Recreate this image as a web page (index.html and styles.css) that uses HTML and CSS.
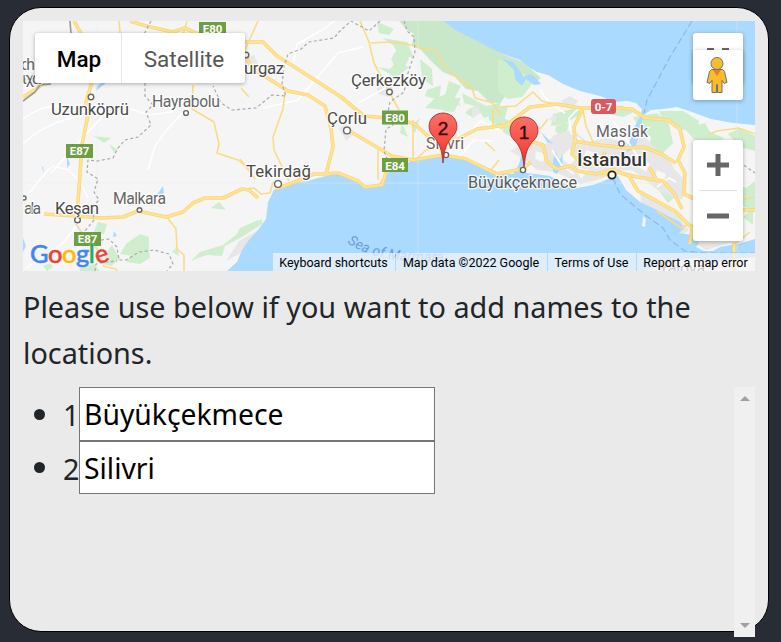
FILE: index.html
```html
<!DOCTYPE html>
<html lang="en">
<head>
<meta charset="utf-8">
<title>Locations</title>
<link rel="stylesheet" href="styles.css">
</head>
<body>
<main class="panel">
  <section class="map">
    <svg class="tiles" viewBox="23 21 732 250" width="732" height="250">
      <rect x="23" y="21" width="732" height="250" fill="#f5f5f5"/>
      <!-- woodland -->
      <g fill="#ceeecd">
        <path fill="#c8e8c9" d="M399 21H444L500 53L523 62L532 70L541 78L532 84L521 75L510 88L500 104L488 101L478 91L466 89L455 77L443 72L432 62L421 50L412 45L414 34L407 30Z"/>
        <path d="M377 22l17 7-5 6-10-2zM382 38l25 4 7 16-15-3-6-10zM391 59l8-13 10 12-6 13-8-4zM396 62l13 5-13 11-18-11 12 2zM420 59l12 10 1 17-11-7zM427 90l14-5-2 15-14-4zM433 100l17-8-5 18-20-2zM449 81l12 5-6 11 6 9-17-7zM448 99l13-1-7 14-11-1zM420 118l-5 15-4-7zM402 123l6 14-8-4zM462 93l24 13 14-3v9l-16 6-7-11-13-4zM469 109l9-4-4 13-9-5zM488 111l20-5-6 23-13-9z"/>
        <path d="M498 59l21 9 13 16-10 13-14 2-10-8zM553 114l23-6 6 5-17 11-14 2zM556 126l13-3-4 16-10-8zM604 113l17-8 13 7-11 5zM633 117l24-4 12 11 4 19-12 12-12-7 2-11-12-9zM659 111l24 0 16 10-1 11-18-3-18-11zM685 129l20-6 5 9 14 6-12 9-15-4zM728 134l12-6 15 7v16l-15-4zM651 145l13 8-4 11-12-5zM657 188l14-6 7 12-10 9zM730 181l16 7 9-7v30l-13-5-8-10zM743 217l10-10v18zM504 118l14 8-5 12-10-6zM553 145l10 2-3 7z"/>
        <path d="M94 136l17 2-7 5zM109 144l9 6-4 3zM120 254l6-10 14-10 9 3v15l-16 4zM98 222l9 2-3 10-12 2zM105 255l7-10 8 14-9 7-8-2zM134 252l15-2 1 8-10 6-14-2zM211 208l8-6 7 8zM191 261l9-9 23-7 19-15 20-11v5l-20 13-17 9-3 10-15-1-9 3zM172 252l5-5 2 9zM43 266l7-3 3 4-6 4zM240 228l18-8 5 3-12 7-15 6zM23 80l10-7 8 7-8 5h-9zM79 268l15-4 6 7H80z"/>
      </g>
      <!-- built-up areas -->
      <g fill="#e7e7e7">
        <path d="M377 83l8-4 8 8-5 10-11-4zM339 128l8-4 8 9-9 8zM472 109l6-3 3 7-9 5zM245 58l9-3 4 8-8 5zM226 261l13-20 19-11-7 13-12 11z"/>
        <path d="M510 151l18-9 15 5 11-12 18-5 16 12 18-4 22 5 15-8 14 15 10 5 8 15 12 12-5 18-9-3-13-5-17-14-11-8-20 1-11 8-20 5-25-12-19-2-13-11zM640 190l14 7 24 19 11 14-7 5-12-13-29-17zM700 228l15 8 17-3 6 7-32 10-13-8z"/>
        <path d="M549 119l8-5-2 9zM561 101l9-5 8 5-6 8z"/>
      </g>
      <!-- open ground between the districts -->
      <path fill="#f7f7f7" d="M536 151l10 3-3 8-8-3zM560 158l9-9 9 7-8 9zM586 150l10 3-4 11-9-4zM575 167l14 3-8 9zM641 158l9 6-4 8-9-6zM657 170l9 4-2 9-9-5z"/>
      <!-- sea and lakes -->
      <g fill="#aadaff">
        <path d="M443 21L457 31L473 39L500 53L520 60L530 68L537 72L548 75L563 84L580 91L600 96L615 102L627 101L636 103L642 109L640 117L635 126L631 138L628 145L631 147L635 139L639 128L645 114L651 110L663 109L677 107L692 112L711 119L733 123L755 125V21Z"/>
        <path d="M227 271L237 262L242 250L248 241L258 230L266 219L268 202L274 190L281 185L307 181L337 173L353 178L363 187L378 186L383 178L389 172L404 165L414 159L440 156L461 159L480 164L497 172L513 174L519 164L522 153L526 159L526 173L535 174L550 176L562 182L577 188L593 185L611 178L618 176L626 190L640 202L657 210L668 216L680 222L684 228L679 233L692 235L699 243L696 247L704 251L713 251L720 247L738 244L755 239V257L731 259L710 264L697 258L680 260L659 264L646 271Z"/>
        <path d="M503 59l10 3 8 10 2 5 8-3 6 5 4 5-7 1-8-6-4 7-7-7-1-9zM553 160l3-8 3 9 4-7-1 12-5 8-4-2zM541 132l12 12-6-2zM626 152l6-11 6-3-3 11zM156 196l7-10 1 7-5 3zM114 231l3 5-4 1zM43 166l1 9-2-8zM67 156l3 8-3 4zM23 238l3 8-3 6zM97 86l8-6 1 3-10 8z"/>
      </g>
      <path fill="#f5f5f5" d="M643 216l3 3-1 8-3-1z"/>
      <g fill="none" stroke="#e9edf1" stroke-width="1"><path d="M23 183H755M97 21V271M418 21V271M737 21V271" opacity=".45"/></g>
      <!-- local roads -->
      <g class="minor">
        <path d="M23 144q17-17 44-25l48-11 14 1M29 193l17-21 7-6 16 4 11 12 8 16M51 173l27-30 24-26M131 109l17 6 24-3M148 170l7-24 10-14 23-25M263 108l35-8 40-47 25-6M294 61l3-17 27-15 10-8M358 103l31-17 17-2M23 119q16-13 36-13M25 269l38-26 16-20M440 143l26-7 15-15 18 9M459 157l15-17 18 1"/>
        <path d="M582 105l-13 13 2 15 16 12M607 112l19 27 19 28M552 150l10 16 12 8M657 187l12-9 7 4M739 127l16 8M540 90l10 14 15 9"/>
      </g>
      <!-- regional roads -->
      <g class="road-line">
        <path d="M119 21l1 12M193 85l-1 24 22 13 5 22-2 9 21 7 12 10M187 21l-4 14M258 21l-14 31M360 21l9 21 5 21 25 47M371 43q31-3 49 5l17 4 7 14 13 11 15 11 3 10 18 5 8 13M285 93l-2 16-10 28 1 13 15 31M413 120v42M166 216l10 13 1 20 7 6v16M103 266l13 3 1 2M76 224l6 9 18 19M500 107l16-1 17-14 9 9 30 7M241 88l8 9M657 211l24 17 8-4 16 6M709 134l8-3 22-3 16 6M493 109v20M413 162l13-12 8-1M485 142l10 9M583 110l3 16 7 16M742 200l12-3M750 232l-15 12-1 17"/>
        <path d="M245 189l9-1 7 6 9-1 3-11M378 150v30M240 159l15 20M548 119l-7 9-12 1M499 160l-8 10 7 4"/>
      </g>
      <!-- main roads: amber casing under a pale fill -->
      <g class="trunk-case">
        <path d="M23 97q17-9 26-20l15-9M92 82l-6 20 2 13-6 30-3 43-2 26M44 214l33 2 25 2 21-1 15-6 28 6 17-5 10-9 12-5h18l19-9 7 1 9 8"/>
        <path d="M74 21l8 14M130 21l16 5 27 6 12-4 15 7 45 7h18l14 14 27 17 37 24 23 19 34 3 17 5 19 18 24-3 19-10 37-5"/>
        <path d="M245 55l7 13 36 23 20 4 17 11 6 22 2 19-7 27-12 0-22 9-16 6M346 129l46 27 21 4 30-5 23 4 30 15 26-5 9-7M324 174l14-1 20 8 7 6 17-2 5-15"/>
        <path d="M500 128l9-5 21-16 27-3 24 4 32 0 19 1 13 9 23 2 12 9 4 18-6 13 7 13-1 21 11 5M583 108l-9 19 1 13-3 14 12 11 15-2 6-11M573 141l27 4 27 3 17-1 17 7 15 9M520 148l13-6 10 3 4 17 10 7 14-3 7 5 18 3 20-5M602 176l12-6 15 6 9 15 13 7 24 13 17 17-2 16M617 172l20 5 26 4 11 12 8 16M649 167l9 15M742 210h13M734 242v29"/>
      </g>
      <g class="trunk-fill">
        <path d="M23 97q17-9 26-20l15-9M92 82l-6 20 2 13-6 30-3 43-2 26M44 214l33 2 25 2 21-1 15-6 28 6 17-5 10-9 12-5h18l19-9 7 1 9 8"/>
        <path d="M74 21l8 14M130 21l16 5 27 6 12-4 15 7 45 7h18l14 14 27 17 37 24 23 19 34 3 17 5 19 18 24-3 19-10 37-5"/>
        <path d="M245 55l7 13 36 23 20 4 17 11 6 22 2 19-7 27-12 0-22 9-16 6M346 129l46 27 21 4 30-5 23 4 30 15 26-5 9-7M324 174l14-1 20 8 7 6 17-2 5-15"/>
        <path d="M500 128l9-5 21-16 27-3 24 4 32 0 19 1 13 9 23 2 12 9 4 18-6 13 7 13-1 21 11 5M583 108l-9 19 1 13-3 14 12 11 15-2 6-11M573 141l27 4 27 3 17-1 17 7 15 9M520 148l13-6 10 3 4 17 10 7 14-3 7 5 18 3 20-5M602 176l12-6 15 6 9 15 13 7 24 13 17 17-2 16M617 172l20 5 26 4 11 12 8 16M649 167l9 15M742 210h13M734 242v29"/>
      </g>
      <!-- borders -->
      <path d="M70 21l1 13M23 101l12-9 5-7 11-1" fill="none" stroke="#999" stroke-width="1.600"/>
      <g class="border">
        <path d="M151 21l-8 15M145 83l0 13 8 9-7 7 5 13-13 12-13 3-7 8-5 10-16 3-9-1-1 12 11 7-4 13 5 8-7 7 2 13-10 12M380 21l-11 10-18-10-12 11-5 6-25 4-8 7-13 5-4 13-2 17 4 12-14-1-16 13-24 2-11-7-8-17M404 21l3 10 7 6 1 15-7 21-4 19-14 10-2 10 5 13-7 4-2 22 4 10M101 240l8-1 8 8 2 13h7l13-8 15-2 15 4 4 10-6 7M95 271l1-7 11-2 10-1M735 159l20 14"/>
      </g>
      <g class="ferry"><path d="M692 21l-22 36-23 43-3 13"/><path d="M613 178l7 16 24 20 19 14 7 12 15 11 19 2h51"/></g>
      <!-- settlement dots -->
      <g class="dots"><circle cx="91" cy="97" r="2.800"/><circle cx="186" cy="113" r="2.400"/><circle cx="246" cy="55" r="2.800"/><circle cx="389.500" cy="92" r="2.800"/><circle cx="347" cy="130.500" r="3.400"/><circle cx="278" cy="184" r="3.400"/><circle cx="77.500" cy="220" r="2.800"/><circle cx="139.500" cy="210" r="2.300"/><circle cx="24" cy="198" r="2"/><circle cx="446" cy="155" r="2.600"/><circle cx="523" cy="170" r="2.600"/><circle cx="621.500" cy="143.500" r="2.600"/><circle class="city" cx="612" cy="175" r="3.700"/></g>
      <!-- road shields -->
      <g class="shields">
        <g fill="#6c9f43"><rect x="199" y="22" width="27" height="13"/><rect x="66" y="144" width="27" height="14"/><rect x="74" y="232" width="27" height="14"/><rect x="382" y="110.500" width="26" height="14"/><rect x="382" y="158" width="26" height="14"/></g>
        <rect x="591" y="99" width="25" height="15" rx="3" fill="#d85a60"/>
        <text x="212.500" y="33">E80</text><text x="79.500" y="155">E87</text><text x="87.500" y="243">E87</text><text x="395" y="121.500">E80</text><text x="395" y="169.500">E84</text><text x="603.500" y="111">0-7</text>
      </g>
      <g class="places">
        <text x="51" y="115" textLength="78">Uzunköprü</text>
        <text x="152" y="107" textLength="68" class="small">Hayrabolu</text>
        <text x="244" y="74" textLength="40">urgaz</text>
        <text x="351" y="86" textLength="75">Çerkezköy</text>
        <text x="327" y="124" textLength="40">Çorlu</text>
        <text x="246" y="177" textLength="65">Tekirdağ</text>
        <text x="55" y="213.500" textLength="44">Keşan</text>
        <text x="113" y="204" textLength="53" class="small">Malkara</text>
        <text x="24" y="214" textLength="17" class="small">ala</text>
        <text x="21" y="70" textLength="14" class="small">ch</text>
        <text x="22" y="84" textLength="19" class="small">ιχα</text>
        <text x="426" y="148.500" textLength="38" class="small">Silivri</text>
        <text x="468" y="188" textLength="109" class="town">Büyükçekmece</text>
        <text x="596" y="137" textLength="52" class="small">Maslak</text>
        <text x="577" y="166" textLength="70" class="capital">İstanbul</text>
        <text x="659" y="274" textLength="46" class="small">Yalova</text>
      </g>
      <path id="sea" d="M347 243Q369 257 400 260T470 260" fill="none"/>
      <text class="sea"><textPath href="#sea">Sea of Marmara</textPath></text>
      <!-- numbered pins -->
      <g class="pin" transform="translate(443 163)"><path d="M0 0C-1-14-4-21-10-27C-17-34-15-49 0-50C15-49 17-34 10-27C4-21 1-14 0 0Z"/><text y="-28">2</text></g>
      <g class="pin" transform="translate(524 167)"><path d="M0 0C-1-14-4-21-10-27C-17-34-15-49 0-50C15-49 17-34 10-27C4-21 1-14 0 0Z"/><text y="-28">1</text></g>
      <defs><linearGradient id="pinFill" x2="0" y2="1"><stop stop-color="#fb7168"/><stop offset=".6" stop-color="#f64b42"/><stop offset="1" stop-color="#d72923"/></linearGradient></defs>
    </svg>
    <div class="map-types"><button class="type active">Map</button><button class="type">Satellite</button></div>
    <div class="fullscreen"><svg width="22" height="22" viewBox="0 0 22 22"><path d="M1.500 8v-6.500H7M15 1.500h5.500V8" fill="none" stroke="#666" stroke-width="3"/></svg></div>
    <div class="street-view">
      <svg width="22" height="38" viewBox="0 0 22 38"><g fill="#fbbc2b" stroke="#737373"><path d="M5.500 13.500h11l2 2 2.500 11-3 .8-2-3v12.200h-4.500v-8h-1v8H6V24.300l-2 3-3-.8 2.500-11z"/><circle cx="11" cy="7.500" r="6"/></g><path d="M7 14h8l-4 6z" fill="#e58026"/></svg>
    </div>
    <div class="zoom-controls"><button class="zoom" aria-label="Zoom in"><svg width="22" height="22" viewBox="0 0 22 22"><path d="M0 11h22M11 0v22" stroke="#666" stroke-width="5"/></svg></button><hr><button class="zoom" aria-label="Zoom out"><svg width="22" height="22" viewBox="0 0 22 22"><path d="M0 11h22" stroke="#666" stroke-width="5"/></svg></button></div>
    <div class="brand"><span class="blue">G</span><span class="red">o</span><span class="yellow">o</span><span class="blue">g</span><span class="green">l</span><span class="red e">e</span></div>
    <footer class="credits"><span class="c1">Keyboard shortcuts</span><span class="c2">Map data ©2022 Google</span><span class="c3">Terms of Use</span><span class="c4">Report a map error</span></footer>
  </section>
  <p class="hint">Please use below if you want to add names to the<br>locations.</p>
  <div class="list-area">
    <ul class="locations">
      <li><span class="num">1</span><input value="Büyükçekmece" aria-label="Location 1"></li>
      <li><span class="num">2</span><input value="Silivri" aria-label="Location 2"></li>
    </ul>
    <div class="scrollbar"><i class="up"></i><i class="down"></i></div>
  </div>
</main>
</body>
</html>
```
FILE: styles.css
```css
* { box-sizing: border-box; }
html, body { margin: 0; height: 642px; overflow: hidden; }
body { background: #282c34; padding: 7px 12px 0 9px; }
.panel { width: 760px; height: 625px; border: 1px solid #000; border-radius: 32px; background: #eaeaea; padding: 13px; color: #212529; font-family: "Noto Sans", sans-serif; }
.map { position: relative; width: 732px; height: 250px; overflow: hidden; font-family: Roboto, sans-serif; }
.tiles { display: block; }
.tiles path { stroke-linejoin: round; }
.minor { fill: none; stroke: #fff; stroke-width: 1.5; }
.road-line { fill: none; stroke: #fadb86; stroke-width: 1.6; }
.trunk-case { fill: none; stroke: #f8d577; stroke-width: 3.6; }
.trunk-fill { fill: none; stroke: #ffe391; stroke-width: 2.2; }
.border { fill: none; stroke: #aaa; stroke-width: 1.2; stroke-dasharray: 3 2.5; }
.ferry { fill: none; stroke: #8fb8e8; stroke-width: 1.2; stroke-dasharray: 7 3; }
.dots { fill: #fff; stroke: #666; stroke-width: 1.4; }
.dots .city { stroke: #222; stroke-width: 1.8; }
.shields text { fill: #fff; font: bold 11.5px Roboto, sans-serif; text-anchor: middle; }
.places { fill: #4b4b4b; font-size: 16.8px; stroke: #fff; stroke-opacity: .8; stroke-width: 2.5px; }
.places text { paint-order: stroke; }
.places .small { fill: #666; font-size: 15.8px; }
.places .town { fill: #5a5a5a; font-size: 16.2px; }
.places .capital { fill: #333; font-size: 19.2px; font-weight: 500; }
.sea { fill: #6d9bda; font-size: 14px; font-style: italic; letter-spacing: .25px; }
.pin path { fill: url(#pinFill); stroke: #b93530; stroke-width: 1; }
.pin text { font: 19px "Liberation Sans", sans-serif; text-anchor: middle; fill: #3b0b09; stroke: #3b0b09; stroke-width: .4; }
.map-types { position: absolute; left: 12px; top: 12px; width: 210px; height: 50px; display: flex; background: #fff; border-radius: 3px; box-shadow: 0 1px 4px rgba(0,0,0,.3); }
button { border: 0; background: transparent; padding: 0; }
.type { width: 123px; padding: 1px 0 0 1px; font: 22.5px/50px Roboto, sans-serif; color: #565656; }
.type.active { width: 87px; padding-left: 2px; color: #000; font-weight: 500; border-right: 1px solid #e6e6e6; }
.fullscreen, .street-view, .zoom-controls { position: absolute; left: 670px; width: 50px; background: #fff; border-radius: 3px; box-shadow: 0 1px 4px rgba(0,0,0,.3); display: flex; align-items: center; justify-content: center; }
.fullscreen { top: 12px; height: 50px; padding-top: 2px; }
.street-view { top: 29px; height: 50px; padding-right: 2px; }
.zoom-controls { top: 119px; height: 101px; flex-direction: column; }
.zoom { width: 50px; height: 50px; display: flex; align-items: center; justify-content: center; padding-right: 1px; }
.zoom-controls hr { width: 38px; height: 1px; border: 0; margin: 0; background: #e0e0e0; }
.brand { position: absolute; left: 7px; top: 216px; font: 500 25.5px/32px Lato, sans-serif; letter-spacing: -.5px; white-space: nowrap; -webkit-text-stroke: .5px; text-shadow: 0 0 2px #fff; }
.brand .e { display: inline-block; transform: rotate(-18deg); }
.blue { color: #4285f4; } .red { color: #ea4335; } .yellow { color: #fbbc05; } .green { color: #34a853; }
.credits { position: absolute; right: 0; bottom: 0; display: flex; gap: 1px; height: 18px; font-size: 12.5px; line-height: 19px; color: #000; white-space: nowrap; }
.credits span { background: rgba(245,245,245,.7); text-align: center; padding-right: 1px; }
.c1 { width: 122px; } .c2 { width: 151px; } .c3 { width: 88px; } .c4 { width: 118px; }
.hint { margin: 13px 0 0; font-size: 28.8px; line-height: 46px; white-space: nowrap; }
.list-area { display: flex; justify-content: space-between; height: 250px; margin-top: 11px; }
.locations { list-style: none; margin: 0; padding: 0 0 0 11px; }
.locations li { display: flex; align-items: center; height: 54px; font-size: 28.8px; }
.locations li + li { height: 53px; }
.locations li::before { content: ""; width: 11px; height: 11px; border-radius: 50%; background: #212529; margin-right: 18px; }
.num { width: 16px; padding-top: 2px; line-height: 50px; }
.locations input { width: 356px; height: 100%; border: 1px solid #767676; padding: 1px 5px 1px 4px; background: #fff; color: #000; font: 28.3px "Noto Sans", sans-serif; }
.scrollbar { width: 21px; height: 250px; background: #f0f0f0; display: flex; flex-direction: column; align-items: center; justify-content: space-between; padding: 9px 0; }
.up, .down { border: 5px solid transparent; border-top-width: 0; border-bottom: 5px solid #a0a0a0; }
.down { border-bottom: 0; border-top: 5px solid #a0a0a0; }
```
